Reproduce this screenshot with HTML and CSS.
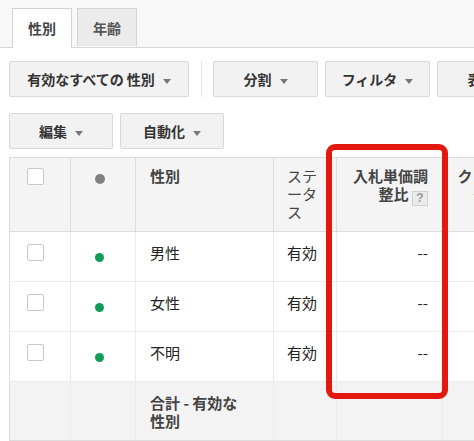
FILE: index.html
```html
<!DOCTYPE html>
<html lang="ja">
<head>
    <meta charset="UTF-8">
    <title>性別</title>
    <link rel="stylesheet" href="styles.css">
</head>
<body>
    <!-- Tabs -->
    <div class="tabs">
        <div class="tab active">性別</div>
        <div class="tab">年齢</div>
    </div>

    <!-- Toolbar -->
    <div class="toolbar">
        <button class="btn btn-wide">有効なすべての 性別<span class="caret"></span></button>
        <span class="divider"></span>
        <button class="btn">分割<span class="caret"></span></button>
        <button class="btn">フィルタ<span class="caret"></span></button>
        <button class="btn">表示<span class="caret"></span></button>
    </div>
    <div class="toolbar second">
        <button class="btn">編集<span class="caret"></span></button>
        <button class="btn">自動化<span class="caret"></span></button>
    </div>

    <!-- Table -->
    <div class="table-wrap">
        <table class="grid">
            <colgroup>
                <col style="width: 61px">
                <col style="width: 65px">
                <col style="width: 138px">
                <col style="width: 63px">
                <col style="width: 106px">
                <col style="width: 74px">
            </colgroup>
            <thead>
                <tr class="head">
                    <th class="c-check"><span class="checkbox"></span></th>
                    <th class="c-dot"><span class="dot grey"></span></th>
                    <th class="bold">性別</th>
                    <th>ステ<br>ータ<br>ス</th>
                    <th class="num bold">入札単価調<br>整比 <span class="help">?</span></th>
                    <th class="num bold last">クリッ<br>ク数</th>
                </tr>
            </thead>
            <tbody>
                <tr>
                    <td class="c-check"><span class="checkbox"></span></td>
                    <td class="c-dot"><span class="dot"></span></td>
                    <td>男性</td>
                    <td>有効</td>
                    <td class="num">--</td>
                    <td class="num"></td>
                </tr>
                <tr>
                    <td class="c-check"><span class="checkbox"></span></td>
                    <td class="c-dot"><span class="dot"></span></td>
                    <td>女性</td>
                    <td>有効</td>
                    <td class="num">--</td>
                    <td class="num"></td>
                </tr>
                <tr>
                    <td class="c-check"><span class="checkbox"></span></td>
                    <td class="c-dot"><span class="dot"></span></td>
                    <td>不明</td>
                    <td>有効</td>
                    <td class="num">--</td>
                    <td class="num"></td>
                </tr>
                <tr class="total">
                    <td></td>
                    <td></td>
                    <td>合計 - 有効な<br>性別</td>
                    <td></td>
                    <td></td>
                    <td></td>
                </tr>
            </tbody>
        </table>
    </div>

    <!-- Highlight box -->
    <div class="highlight"></div>
</body>
</html>
```

FILE: styles.css
```css
/* General Styles */
body {
    font-family: "Noto Sans CJK JP", "Liberation Sans", sans-serif;
    background: #fff;
    color: #222;
    margin: 0;
    width: 474px;
    height: 441px;
    overflow: hidden;
    position: relative;
}

/* Tabs */
.tabs {
    display: flex;
    gap: 5px;
    height: 39px;
    padding: 8px 0 0 12px;
    background: #f8f8f8;
    border-bottom: 1px solid #d6d6d6;
}

.tab {
    box-sizing: border-box;
    width: 60px;
    height: 38px;
    border: 1px solid #d4d4d4;
    border-bottom: none;
    background: #ebebeb;
    color: #555;
    font-size: 14px;
    font-weight: bold;
    line-height: 38px;
    text-align: center;
}

.tab.active {
    height: 40px;
    background: #fff;
    color: #444;
}

/* Toolbar */
.toolbar {
    display: flex;
    gap: 7px;
    padding-left: 9px;
    margin-top: 13px;
    white-space: nowrap;
}

.toolbar.second {
    margin-top: 16px;
}

.btn {
    box-sizing: border-box;
    flex: none;
    width: 105px;
    height: 36px;
    padding: 0;
    border: 1px solid #d9d9d9;
    border-radius: 2px;
    background: #f2f2f2;
    color: #333;
    font-family: inherit;
    font-size: 14px;
    font-weight: bold;
}

.second .btn {
    width: 104px;
}

.btn-wide {
    width: 180px;
}

.caret {
    display: inline-block;
    width: 0;
    height: 0;
    margin-left: 8px;
    vertical-align: middle;
    border-left: 4px solid transparent;
    border-right: 4px solid transparent;
    border-top: 5px solid #777;
}

.divider {
    flex: none;
    width: 1px;
    height: 36px;
    margin: 0 4px 0 5px;
    background: #e2e2e2;
}

/* Table */
.table-wrap {
    margin-top: 8px;
    padding-left: 9px;
}

.grid {
    table-layout: fixed;
    width: 507px;
    border-collapse: collapse;
    font-size: 15px;
    line-height: 18px;
}

.grid tr {
    height: 50px;
}

.grid tr.head {
    height: 74px;
}

.grid tr.total {
    height: 59px;
}

.grid th,
.grid td {
    padding: 12px 14px 0 14px;
    vertical-align: top;
    text-align: left;
    border-left: 1px solid #ebebeb;
    border-bottom: 1px solid #ebebeb;
}

.grid th {
    padding-top: 9px;
    background: #f4f4f4;
    color: #444;
    font-weight: normal;
    border-top: 1px solid #dcdcdc;
    border-left-color: #dcdcdc;
    border-bottom-color: #dcdcdc;
}

.grid th.bold {
    font-weight: bold;
}

.grid th.last {
    padding-left: 10px;
}

.grid tr > :first-child {
    border-left-color: #dcdcdc;
}

.grid th:nth-child(4),
.grid td:nth-child(4) {
    padding-left: 13px;
}

.grid .num {
    text-align: right;
}

.grid .c-check {
    padding-left: 17px;
    padding-top: 10px;
}

.grid td.c-check {
    padding-top: 12px;
}

.grid .c-dot {
    text-align: center;
    padding: 16px 7px 0 0;
}

.grid td.c-dot {
    padding-top: 21px;
}

.checkbox {
    display: block;
    box-sizing: border-box;
    width: 17px;
    height: 17px;
    border: 1px solid #c8c8c8;
    border-radius: 2px;
    background: #fff;
}

.dot {
    display: block;
    margin: 0 auto;
    width: 9px;
    height: 9px;
    border-radius: 50%;
    background: #0f9d58;
}

.dot.grey {
    width: 10px;
    height: 10px;
    background: #808080;
}

.help {
    display: inline-block;
    box-sizing: border-box;
    width: 16px;
    height: 15px;
    border: 1px solid #d2d2d2;
    background: #ebebeb;
    color: #9a9a9a;
    font-family: "Liberation Sans", sans-serif;
    font-size: 12px;
    font-weight: bold;
    line-height: 13px;
    text-align: center;
    vertical-align: -2px;
}

.total td {
    background: #f3f3f3;
    color: #444;
    font-weight: bold;
    border-bottom-color: #dcdcdc;
}

/* Red highlight around the bid adjustment column */
.highlight {
    position: absolute;
    left: 326px;
    top: 144px;
    width: 122px;
    height: 255px;
    box-sizing: border-box;
    border: 6px solid #e3180e;
    border-radius: 9px;
}
```
